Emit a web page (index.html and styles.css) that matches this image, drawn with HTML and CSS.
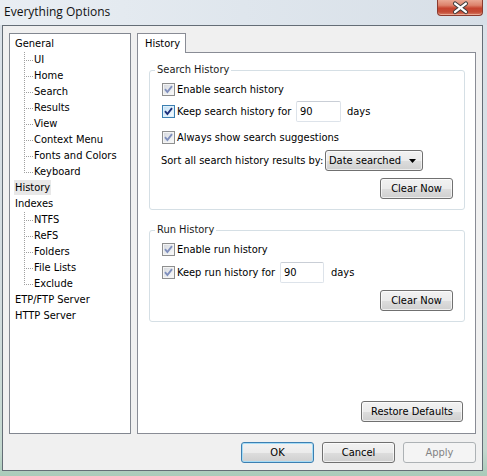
FILE: index.html
```html
<!DOCTYPE html>
<html>
<head>
<meta charset="utf-8">
<title>Everything Options</title>
<link rel="stylesheet" href="styles.css">
</head>
<body>
<div class="window">
  <div class="titlebar">
    <span class="title">Everything Options</span>
    <div class="close">
      <svg width="46" height="16" viewBox="0 0 46 16">
        <path d="M18.5 3.5 L29.5 12 M29.5 3.5 L18.5 12" stroke="#3b3b3b" stroke-width="4.4" stroke-linecap="round" fill="none"/>
        <path d="M18.5 3.5 L29.5 12 M29.5 3.5 L18.5 12" stroke="#ffffff" stroke-width="2.4" stroke-linecap="round" fill="none"/>
      </svg>
    </div>
  </div>
  <div class="client">
    <div class="main">
      <ul class="tree">
        <li class="node">General</li>
        <li class="child">UI</li>
        <li class="child">Home</li>
        <li class="child">Search</li>
        <li class="child">Results</li>
        <li class="child">View</li>
        <li class="child">Context Menu</li>
        <li class="child">Fonts and Colors</li>
        <li class="child last">Keyboard</li>
        <li class="node"><span class="sel">History</span></li>
        <li class="node">Indexes</li>
        <li class="child">NTFS</li>
        <li class="child">ReFS</li>
        <li class="child">Folders</li>
        <li class="child">File Lists</li>
        <li class="child last">Exclude</li>
        <li class="node">ETP/FTP Server</li>
        <li class="node">HTTP Server</li>
      </ul>
      <div class="tabs">
        <div class="tabstrip"><div class="tab">History</div></div>
        <div class="panel">
          <div class="group search">
            <span class="legend">Search History</span>
            <div class="row r-check">
              <span class="cb"><svg width="11" height="11" viewBox="0 0 11 11"><path d="M2 5.2 L4.4 8 L9 2.2" fill="none" stroke="#7f8fbd" stroke-width="1.9"/></svg></span>
              <span class="lbl">Enable search history</span>
            </div>
            <div class="row r-input">
              <span class="cb hot"><svg width="11" height="11" viewBox="0 0 11 11"><path d="M2 5.2 L4.4 8 L9 2.2" fill="none" stroke="#1d2f7a" stroke-width="1.9"/></svg></span>
              <span class="lbl w-search">Keep search history for</span>
              <span class="edit">90</span>
              <span class="unit">days</span>
            </div>
            <div class="row r-check r3">
              <span class="cb"><svg width="11" height="11" viewBox="0 0 11 11"><path d="M2 5.2 L4.4 8 L9 2.2" fill="none" stroke="#7f8fbd" stroke-width="1.9"/></svg></span>
              <span class="lbl">Always show search suggestions</span>
            </div>
            <div class="row r-sort">
              <span class="sort-lbl">Sort all search history results by:</span>
              <span class="combo"><span class="combo-text">Date searched</span><svg class="arrow" width="7" height="4" viewBox="0 0 7 4"><path d="M0 0 H7 L3.5 4 Z" fill="#000"/></svg></span>
            </div>
            <div class="row r-btn">
              <button class="btn">Clear Now</button>
            </div>
          </div>
          <div class="group run">
            <span class="legend">Run History</span>
            <div class="row r-check">
              <span class="cb"><svg width="11" height="11" viewBox="0 0 11 11"><path d="M2 5.2 L4.4 8 L9 2.2" fill="none" stroke="#7f8fbd" stroke-width="1.9"/></svg></span>
              <span class="lbl">Enable run history</span>
            </div>
            <div class="row r-input r2run">
              <span class="cb"><svg width="11" height="11" viewBox="0 0 11 11"><path d="M2 5.2 L4.4 8 L9 2.2" fill="none" stroke="#7f8fbd" stroke-width="1.9"/></svg></span>
              <span class="lbl w-run">Keep run history for</span>
              <span class="edit">90</span>
              <span class="unit">days</span>
            </div>
            <div class="row r-btn">
              <button class="btn">Clear Now</button>
            </div>
          </div>
          <div class="panel-foot">
            <button class="btn restore">Restore Defaults</button>
          </div>
        </div>
      </div>
    </div>
    <div class="footer">
      <button class="btn default">OK</button>
      <button class="btn">Cancel</button>
      <button class="btn disabled">Apply</button>
    </div>
  </div>
</div>
</body>
</html>
```

FILE: styles.css
```css
* { box-sizing: border-box; }
html, body { margin: 0; padding: 0; }
body {
  width: 487px;
  height: 476px;
  overflow: hidden;
  font-family: Tahoma, "DejaVu Sans Condensed", "Liberation Sans", sans-serif;
  font-size: 11px;
  color: #000;
}
.window {
  width: 487px;
  height: 476px;
  display: flex;
  flex-direction: column;
  background: linear-gradient(to bottom, #e6ebf0 0px, #dbe2e9 25px, #d3dcdf 300px, #c4d8cf 450px, #a9cbb9 476px);
}
.titlebar {
  height: 25px;
  display: flex;
  justify-content: space-between;
  align-items: flex-start;
  background: linear-gradient(to right, #e9eef3 0%, #dfe6ed 50%, #d7dfe7 100%);
}
.title {
  font-family: "Open Sans", "Liberation Sans", sans-serif;
  font-size: 12px;
  line-height: 24px;
  padding-left: 4px;
  color: #111;
}
.close {
  width: 46px;
  height: 16px;
  margin-right: 4px;
  border: 1px solid #8a3a2e;
  border-top: none;
  border-radius: 0 0 4px 4px;
  background: linear-gradient(to bottom, #eaa893 0%, #dd836c 35%, #c6442f 55%, #c44c36 80%, #d9806a 100%);
  box-shadow: inset 0 -1px 0 rgba(255,220,200,0.5);
  display: flex;
}
.close svg { display: block; margin-left: -1px; }
.client {
  margin: 0 4px 5px 2px;
  height: 446px;
  border: 1px solid #646d76;
  background: #f0f0f0;
  display: flex;
  flex-direction: column;
}
.main {
  display: flex;
  gap: 6px;
  padding: 7px 6px 0 6px;
}
.tree {
  list-style: none;
  margin: 0;
  width: 122px;
  height: 401px;
  padding: 2px 0 0 5px;
  border: 1px solid #828790;
  background: #fff;
}
.tree li {
  height: 16px;
  line-height: 16px;
  white-space: nowrap;
  position: relative;
}
.tree .node { padding-left: 0; }
.tree .sel {
  display: inline-block;
  background: #e8e8e8;
  padding: 0 1px 0 1px;
  margin-left: -1px;
  line-height: 15px;
}
.tree .child { padding-left: 19px; }
.tree .child::before {
  content: "";
  position: absolute;
  left: 9px;
  top: 0;
  width: 1px;
  height: 16px;
  background: repeating-linear-gradient(to bottom, #a0a0a0 0 1px, transparent 1px 2px);
}
.tree .child.last::before { height: 9px; }
.tree .child::after {
  content: "";
  position: absolute;
  left: 10px;
  top: 8px;
  width: 8px;
  height: 1px;
  background: repeating-linear-gradient(to right, transparent 0 1px, #a0a0a0 1px 2px);
}
.tabs {
  width: 339px;
  height: 401px;
  display: flex;
  flex-direction: column;
}
.tabstrip {
  height: 19px;
  display: flex;
  position: relative;
  z-index: 1;
}
.tab {
  width: 49px;
  height: 20px;
  border: 1px solid #898c95;
  border-bottom: none;
  background: #fff;
  padding-left: 7px;
  line-height: 19px;
}
.panel {
  flex: 1;
  border: 1px solid #898c95;
  background: #fff;
  display: flex;
  flex-direction: column;
}
.group {
  position: relative;
  border: 1px solid #d5dfe5;
  border-radius: 3px;
  margin: 0 10px 0 11px;
  padding: 9px 11px 9px 12px;
  display: flex;
  flex-direction: column;
}
.group.search { margin-top: 17px; padding-bottom: 10px; }
.group.run { margin-top: 20px; padding-bottom: 10px; }
.legend {
  position: absolute;
  left: 5px;
  top: -8px;
  padding: 0 2px;
  background: #fff;
  line-height: 14px;
  color: #1b1b1b;
}
.row {
  display: flex;
  align-items: center;
}
.r-check { height: 18px; }
.r3 { margin-top: 6px; }
.r-input { height: 21px; margin-top: 3px; }
.r2run { margin-top: 4px; }
.r-sort { height: 21px; margin-top: 4px; margin-left: -1px; }
.r-btn { justify-content: flex-end; margin-top: 7px; }
.cb {
  width: 13px;
  height: 13px;
  flex: none;
  border: 1px solid #8e8f8f;
  background: linear-gradient(135deg, #d3d6dc 0%, #eceef0 60%, #fbfbfb 100%);
  box-shadow: inset 0 0 0 1px #f4f4f4;
  display: flex;
}
.cb.hot {
  border-color: #3c7fb1;
  background: linear-gradient(135deg, #c1dff4 0%, #e3f1fb 60%, #fbfdff 100%);
  box-shadow: inset 0 0 0 1px #def0fb;
}
.cb svg { display: block; }
.lbl {
  margin-left: 2px;
  white-space: nowrap;
}
.w-search { width: 119px; flex: none; }
.w-run { width: 103px; flex: none; }
.edit {
  width: 45px;
  height: 21px;
  flex: none;
  border: 1px solid #dde3ea;
  border-top-color: #c9ced6;
  border-radius: 2px;
  background: #fff;
  padding-left: 3px;
  line-height: 19px;
}
.r2run .edit { width: 44px; }
.unit { margin-left: 6px; }
.r2run .unit { margin-left: 7px; }
.sort-lbl { width: 164px; flex: none; white-space: nowrap; }
.combo {
  width: 98px;
  height: 21px;
  border: 1px solid #707070;
  border-radius: 3px;
  background: linear-gradient(to bottom, #f2f2f2 0%, #ebebeb 50%, #dddddd 51%, #cfcfcf 100%);
  box-shadow: inset 0 0 0 1px rgba(255,255,255,0.6);
  display: flex;
  align-items: center;
  justify-content: space-between;
  padding: 0 6px 0 3px;
}
.combo-text { line-height: 19px; }
.arrow { display: block; }
.btn {
  width: 73px;
  height: 21px;
  padding: 0;
  font-family: inherit;
  font-size: 11px;
  color: #000;
  border: 1px solid #707070;
  border-radius: 3px;
  background: linear-gradient(to bottom, #f2f2f2 0%, #ebebeb 50%, #dddddd 51%, #cfcfcf 100%);
  box-shadow: inset 0 0 0 1px rgba(255,255,255,0.65);
}
.panel-foot {
  margin-top: auto;
  display: flex;
  justify-content: flex-end;
  padding: 0 12px 11px 0;
}
.btn.restore { width: 102px; }
.footer {
  display: flex;
  justify-content: flex-end;
  gap: 8px;
  padding: 8px 6px 0 0;
}
.btn.default {
  border-color: #3c7fb1;
  box-shadow: inset 0 0 0 1px #a6dcf6;
}
.btn.disabled {
  border-color: #adb2b5;
  background: #f4f4f4;
  box-shadow: none;
  color: #838383;
}
```
